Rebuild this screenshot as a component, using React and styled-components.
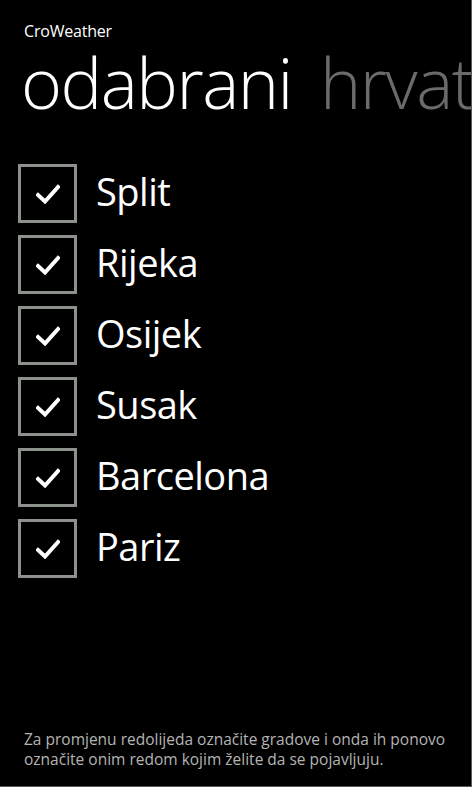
import styled, { createGlobalStyle } from 'styled-components'

const GlobalStyle = createGlobalStyle`
    html, body {
        margin: 0;
        padding: 0;
        background: #000;
    }
    * {
        box-sizing: border-box;
    }
`

const Screen = styled.div`
    display: flex;
    flex-direction: column;
    width: 472px;
    height: 787px;
    background: #000;
    color: #fff;
    font-family: 'Open Sans', 'Noto Sans', sans-serif;
    overflow: hidden;
    border-right: 1px solid #5a5a5a;
    border-bottom: 1px solid #5a5a5a;
`

const AppTitle = styled.div`
    padding: 22px 0 0 24px;
    font-size: 16px;
    line-height: 18px;
    letter-spacing: -0.2px;
`

const PivotHeader = styled.div`
    display: flex;
    gap: 28px;
    padding-left: 21px;
    margin-top: 4px;
    height: 76px;
    white-space: nowrap;
    font-size: 70px;
    font-weight: 300;
    line-height: 76px;
    letter-spacing: -1.5px;
`

const PivotItem = styled.span`
    color: ${({ active }) => (active ? '#fff' : '#6b6b6b')};
`

const CityList = styled.ul`
    flex: 1;
    list-style: none;
    margin: 0;
    padding: 44px 0 0 18px;
    display: flex;
    flex-direction: column;
    gap: 12px;
`

const CityRow = styled.li`
    display: flex;
    align-items: center;
    gap: 19px;
    height: 59px;
`

const CheckBox = styled.div`
    display: flex;
    align-items: center;
    justify-content: center;
    width: 59px;
    height: 59px;
    border: 3px solid #8c918c;
    flex-shrink: 0;
`

const CityName = styled.span`
    font-size: 38px;
    line-height: 59px;
    letter-spacing: -0.5px;
    padding-bottom: 4px;
`

const Hint = styled.p`
    margin: 0;
    padding: 0 10px 17px 24px;
    font-size: 15.5px;
    line-height: 20px;
    color: #b4b4b4;
`

const cities = ['Split', 'Rijeka', 'Osijek', 'Susak', 'Barcelona', 'Pariz']

function Check() {
    return (
        <svg width="24" height="20" viewBox="0 0 24 20">
            <path
                d="M2 11 L9 17.5 L22 3"
                fill="none"
                stroke="#fff"
                strokeWidth="4"
                strokeLinecap="square"
            />
        </svg>
    )
}

export default function App() {
    return (
        <>
            <GlobalStyle />
            <Screen>
                <AppTitle>CroWeather</AppTitle>
                <PivotHeader>
                    <PivotItem active>odabrani</PivotItem>
                    <PivotItem>hrvatska</PivotItem>
                </PivotHeader>
                <CityList>
                    {cities.map((city) => (
                        <CityRow key={city}>
                            <CheckBox>
                                <Check />
                            </CheckBox>
                            <CityName>{city}</CityName>
                        </CityRow>
                    ))}
                </CityList>
                <Hint>
                    Za promjenu redolijeda označite gradove i onda ih ponovo
                    <br />
                    označite onim redom kojim želite da se pojavljuju.
                </Hint>
            </Screen>
        </>
    )
}
